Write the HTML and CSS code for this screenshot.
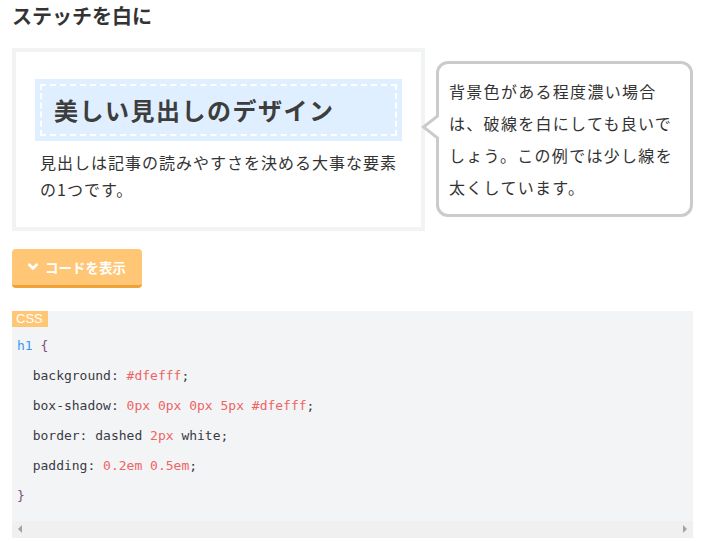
FILE: index.html
```html
<!DOCTYPE html>
<html lang="ja">
<head>
    <meta charset="UTF-8">
    <meta name="viewport" content="width=device-width, initial-scale=1.0">
    <title>ステッチを白に</title>
    <link rel="stylesheet" href="styles.css">
</head>
<body>
    <h2 class="title">ステッチを白に</h2>

    <div class="demo">
        <div class="demo-box">
            <h1 class="sample-heading">美しい見出しのデザイン</h1>
            <p class="sample-text">見出しは記事の読みやすさを決める大事な要素の1つです。</p>
        </div>
        <div class="bubble">背景色がある程度濃い場合は、破線を白にしても良いでしょう。この例では少し線を太くしています。</div>
    </div>

    <button class="code-toggle">
        <svg class="chevron" width="10" height="8" viewBox="0 0 10 8">
            <path d="M1.4 1.8 L5 5.4 L8.6 1.8" fill="none" stroke="#fff" stroke-width="2.8" stroke-linecap="round" stroke-linejoin="round"/>
        </svg>
        コードを表示
    </button>

    <div class="code">
        <div class="code-label">CSS</div>
        <div class="code-body">
            <div class="line"><span class="sel">h1</span> <span class="brace">{</span></div>
            <div class="line">  <span>background:</span> <span class="val">#dfefff</span>;</div>
            <div class="line">  <span>box-shadow:</span> <span class="val">0px 0px 0px 5px #dfefff</span>;</div>
            <div class="line">  <span>border: dashed</span> <span class="val">2px</span> <span>white;</span></div>
            <div class="line">  <span>padding:</span> <span class="val">0.2em 0.5em</span>;</div>
            <div class="line"><span class="brace">}</span></div>
        </div>
        <div class="scrollbar">
            <span class="arrow arrow-left"></span>
            <span class="arrow arrow-right"></span>
        </div>
    </div>
</body>
</html>
```

FILE: styles.css
```css
* {
    box-sizing: border-box;
}
body {
    margin: 0;
    padding: 0 10px 0 12px;
    font-family: 'Noto Sans CJK JP', 'Noto Sans', sans-serif;
    color: #333;
    background: #fff;
}
.title {
    margin: 0 0 17px;
    font-size: 20px;
    line-height: 31px;
    font-weight: bold;
    color: #333;
}
.demo {
    display: flex;
    align-items: center;
}
.demo-box {
    width: 413px;
    border: 4px solid #f2f3f5;
    padding: 32px 24px 24px;
}
.sample-heading {
    margin: 0;
    background: #dfefff;
    box-shadow: 0px 0px 0px 5px #dfefff;
    border: dashed 2px white;
    padding: 0.2em 0.5em;
    font-size: 24px;
    line-height: 38px;
    letter-spacing: 1.5px;
    font-weight: bold;
    color: #3d3d3d;
}
.sample-text {
    margin: 13px 0 0;
    font-size: 16px;
    line-height: 27px;
    letter-spacing: 1px;
    color: #333;
}
.bubble {
    position: relative;
    margin-left: 11px;
    width: 257px;
    border: 3px solid #cbcbcb;
    border-radius: 12px;
    padding: 11px 12px 11px 10px;
    font-size: 16px;
    line-height: 32px;
    letter-spacing: 1.3px;
    color: #333;
    background: #fff;
}
.bubble::before,
.bubble::after {
    content: "";
    position: absolute;
    border-style: solid;
    border-color: transparent;
}
.bubble::before {
    left: -18px;
    top: 49px;
    border-width: 14px 18px 14px 0;
    border-right-color: #cbcbcb;
}
.bubble::after {
    left: -13px;
    top: 52px;
    border-width: 11px 14px 11px 0;
    border-right-color: #fff;
}
.code-toggle {
    display: flex;
    align-items: center;
    gap: 7px;
    margin: 18px 0 23px;
    width: 130px;
    height: 39px;
    padding: 0 0 0 16px;
    border: none;
    border-bottom: 3px solid #f0a236;
    border-radius: 4px;
    background: #ffc675;
    color: #fff;
    font-family: inherit;
    font-size: 13.5px;
    font-weight: bold;
}
.code {
    background: #f3f4f6;
}
.code-label {
    width: max-content;
    background: #ffc675;
    color: #fff;
    font-family: 'Liberation Sans', sans-serif;
    font-size: 13px;
    line-height: 16px;
    padding: 0 5px 0 4px;
}
.code-body {
    padding: 2px 5px 12px;
    font-family: 'DejaVu Sans Mono', monospace;
    font-size: 13px;
    line-height: 30px;
    color: #3a3a44;
}
.line {
    height: 30px;
    padding-top: 2px;
    white-space: pre;
}
.sel {
    color: #3a98f2;
}
.brace {
    color: #7b4f78;
}
.val {
    color: #ee6464;
}
.scrollbar {
    display: flex;
    justify-content: space-between;
    align-items: center;
    height: 17px;
    padding: 0 6px 0 6px;
    background: #f0f0f0;
}
.arrow {
    width: 0;
    height: 0;
    border-style: solid;
    border-color: transparent;
}
.arrow-left {
    border-width: 4px 4px 4px 0;
    border-right-color: #a3a3a3;
}
.arrow-right {
    border-width: 4px 0 4px 4px;
    border-left-color: #a3a3a3;
}
```
